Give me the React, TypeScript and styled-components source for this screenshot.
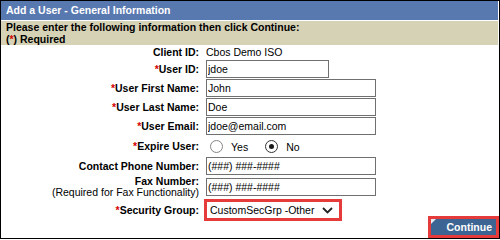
import React from "react";
import styled, { createGlobalStyle } from "styled-components";

const Global = createGlobalStyle`
  html, body { margin: 0; padding: 0; background: #fff; }
  body {
    font-family: "Liberation Sans", Arial, sans-serif;
    font-size: 10.5px;
    color: #000;
  }
`;

const Panel = styled.div`
  box-sizing: border-box;
  width: 500px;
  height: 239px;
  border: 1px solid #000;
  display: flex;
  flex-direction: column;
  background: #fff;
`;

const Header = styled.div`
  height: 19px;
  margin-right: 1px;
  background: #5878b0;
  color: #fff;
  font-weight: bold;
  line-height: 19px;
  padding-left: 5px;
`;

const Instructions = styled.div`
  margin: 1px 1px 0 0;
  height: 24px;
  background: #d6d2b5;
  font-weight: bold;
  line-height: 12px;
  padding-left: 5px;
`;

const Star = styled.span`
  color: #d40000;
`;

const Form = styled.div`
  flex: 1;
  display: flex;
  flex-direction: column;
`;

const Row = styled.div<{ $h: number }>`
  display: flex;
  align-items: center;
  height: ${(p) => p.$h}px;
  flex: none;
`;

const Label = styled.div<{ $lh?: number }>`
  box-sizing: border-box;
  width: 205px;
  flex: none;
  padding-right: 7px;
  text-align: right;
  font-weight: bold;
  line-height: ${(p) => p.$lh ?? 14}px;
`;

const Note = styled.span`
  display: block;
  font-weight: normal;
`;

const Value = styled.span`
  line-height: 14px;
`;

const TextInput = styled.input<{ $w: number }>`
  box-sizing: border-box;
  width: ${(p) => p.$w}px;
  height: 18px;
  margin: 0;
  padding: 0 1px;
  border: 1px solid #707070;
  border-radius: 0;
  background: #fff;
  color: #000;
  font-family: "Liberation Sans", Arial, sans-serif;
  font-size: 10.5px;
  outline: none;
`;

const RadioGroup = styled.div`
  display: flex;
  align-items: center;
  padding-left: 3.5px;
  margin-top: 1px;
`;

const RadioOption = styled.label<{ $gap?: number }>`
  display: flex;
  align-items: center;
  gap: 8.5px;
  margin-right: ${(p) => p.$gap ?? 0}px;
  line-height: 14px;
  padding-top: 1px;
`;

const RadioDot = styled.span<{ $checked?: boolean }>`
  box-sizing: border-box;
  width: 13px;
  height: 13px;
  margin-top: -1px;
  border-radius: 50%;
  border: 1px solid ${(p) => (p.$checked ? "#333" : "#858585")};
  background: #fff;
  display: flex;
  align-items: center;
  justify-content: center;
  &::after {
    content: "";
    width: 5px;
    height: 5px;
    border-radius: 50%;
    background: ${(p) => (p.$checked ? "#1a1a1a" : "transparent")};
  }
`;

const LastRow = styled.div`
  flex: 1;
  display: flex;
  justify-content: space-between;
  align-items: flex-start;
  padding-top: 0.5px;
`;

const SelectLine = styled.div`
  display: flex;
  align-items: center;
  height: 22px;
`;

const SelectBox = styled.div`
  box-sizing: border-box;
  width: 138px;
  height: 22px;
  margin-left: -2px;
  border: 3px solid #e53b3b;
  padding: 0 6px 0 3px;
  background: #fff;
  display: flex;
  align-items: center;
  justify-content: space-between;
  line-height: 14px;
`;

const Highlight = styled.div`
  box-sizing: border-box;
  align-self: flex-end;
  width: 71px;
  height: 22px;
  border: 3px solid #e53b3b;
  display: flex;
`;

const ContinueButton = styled.button`
  position: relative;
  box-sizing: border-box;
  width: 65px;
  height: 16px;
  margin: 0;
  padding: 0 4px 0 0;
  border: none;
  border-radius: 0;
  background: #3d6594;
  color: #fff;
  font-family: "Liberation Sans", Arial, sans-serif;
  font-size: 10.5px;
  font-weight: bold;
  text-align: right;
  line-height: 16px;
  &::before {
    content: "";
    position: absolute;
    left: 0;
    top: 0;
    width: 0;
    height: 0;
    border-top: 5px solid #e8ecf2;
    border-right: 5px solid transparent;
  }
`;

const Chevron = () => (
  <svg width="11" height="7" viewBox="0 0 11 7">
    <path d="M1 1 L5.5 5.5 L10 1" fill="none" stroke="#222" strokeWidth="1.8" />
  </svg>
);

export default function App() {
  return (
    <>
      <Global />
      <Panel>
        <Header>Add a User - General Information</Header>
        <Instructions>
          Please enter the following information then click Continue:
          <br />(<Star>*</Star>) Required
        </Instructions>
        <Form>
          <Row $h={14.5}>
            <Label>Client ID:</Label>
            <Value>Cbos Demo ISO</Value>
          </Row>
          <Row $h={19}>
            <Label>
              <Star>*</Star>User ID:
            </Label>
            <TextInput $w={123} defaultValue="jdoe" />
          </Row>
          <Row $h={19}>
            <Label>
              <Star>*</Star>User First Name:
            </Label>
            <TextInput $w={170} defaultValue="John" />
          </Row>
          <Row $h={19}>
            <Label>
              <Star>*</Star>User Last Name:
            </Label>
            <TextInput $w={170} defaultValue="Doe" />
          </Row>
          <Row $h={19}>
            <Label>
              <Star>*</Star>User Email:
            </Label>
            <TextInput $w={170} defaultValue="jdoe@email.com" />
          </Row>
          <Row $h={20.5}>
            <Label>
              <Star>*</Star>Expire User:
            </Label>
            <RadioGroup>
              <RadioOption $gap={16.5}>
                <RadioDot />
                Yes
              </RadioOption>
              <RadioOption>
                <RadioDot $checked />
                No
              </RadioOption>
            </RadioGroup>
          </Row>
          <Row $h={19.5}>
            <Label>Contact Phone Number:</Label>
            <TextInput $w={170} defaultValue="(###) ###-####" />
          </Row>
          <Row $h={23}>
            <Label $lh={11.5}>
              Fax Number:
              <Note>(Required for Fax Functionality)</Note>
            </Label>
            <TextInput $w={170} defaultValue="(###) ###-####" />
          </Row>
          <LastRow>
            <SelectLine>
              <Label>
                <Star>*</Star>Security Group:
              </Label>
              <SelectBox>
                <span>CustomSecGrp -Other</span>
                <Chevron />
              </SelectBox>
            </SelectLine>
            <Highlight>
              <ContinueButton>Continue</ContinueButton>
            </Highlight>
          </LastRow>
        </Form>
      </Panel>
    </>
  );
}
